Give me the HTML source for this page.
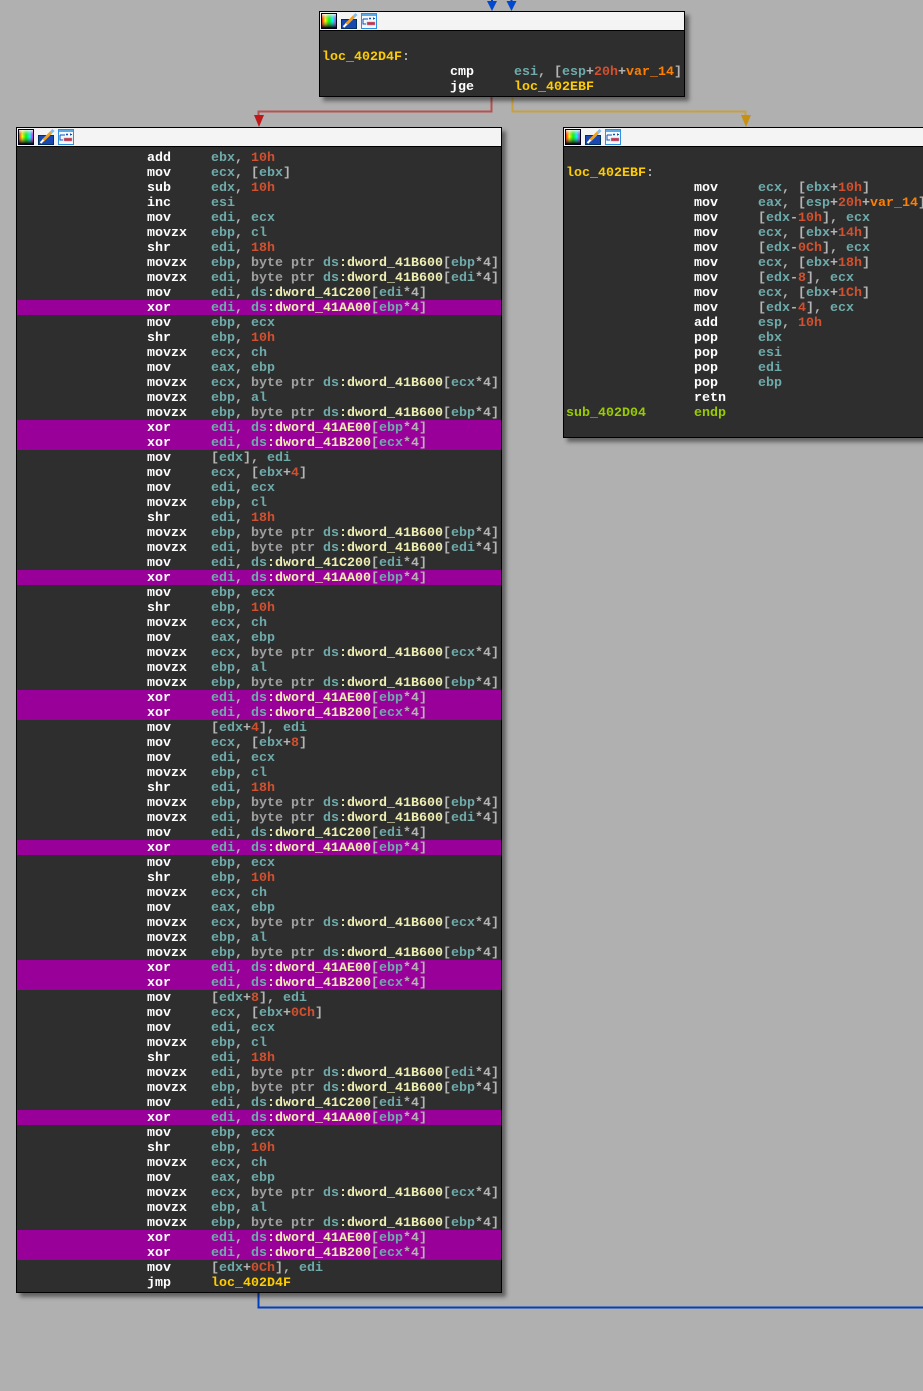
<!DOCTYPE html>
<html><head><meta charset="utf-8"><style>
html,body{margin:0;padding:0;width:923px;height:1391px;overflow:hidden;background:#b0b0b0}
.box{position:absolute;box-sizing:border-box;border:1px solid #000;background:#2e2e2e;box-shadow:4px 4px 4px rgba(0,0,0,.45);font:bold 13.33px/17px "Liberation Mono",monospace;color:#b4b4b4}
.t{position:absolute;left:0;top:0;right:0;height:18px;background:#f4f4f4;border-bottom:1px solid #000}
.t svg{position:absolute;left:1px;top:1px}
.x{position:absolute;left:0;right:0}
.l{height:15px;padding-left:130px;white-space:pre}
.f{height:15px;padding-left:2px;white-space:pre}
.h{background:#990099}
m{display:inline-block;width:64px;color:#fff}
r{color:#6fabab}
n{color:#d2502e}
k{color:#a0a0a0}
d{color:#efefb4}
c{color:#ffcc00}
v{color:#ff8000}
e{color:#9c0}
svg.w{position:absolute;left:0;top:0}
</style></head><body>
<svg class="w" width="923" height="1391">
<defs>
<linearGradient id="hg" x1="0" x2="1" y1="0" y2="0"><stop offset="0" stop-color="#f00"/><stop offset=".25" stop-color="#ff0"/><stop offset=".5" stop-color="#0f0"/><stop offset=".75" stop-color="#0ff"/><stop offset="1" stop-color="#f0f"/></linearGradient>
<linearGradient id="vg" x1="0" x2="0" y1="0" y2="1"><stop offset="0" stop-color="#fff" stop-opacity=".85"/><stop offset=".45" stop-color="#888" stop-opacity="0"/><stop offset="1" stop-color="#000"/></linearGradient>
<g id="ic">
<rect x=".5" y=".5" width="15" height="15" fill="url(#hg)" stroke="#000018"/>
<rect x="1" y="1" width="14" height="14" fill="url(#vg)"/>
<rect x="20.5" y="6.500" width="15" height="9" fill="#1848b0" stroke="#003060"/>
<path d="M25 11.500 L33 3.500" stroke="#f0a020" stroke-width="3"/>
<path d="M33 3.500 L35.500 1" stroke="#80c0f0" stroke-width="3"/>
<path d="M22.500 14 L25.500 11" stroke="#fff" stroke-width="2"/>
<rect x="40.5" y=".5" width="15" height="15" fill="#f4f8ff" stroke="#3090e0"/>
<rect x="41" y="1" width="14" height="2" fill="#60a8e0"/>
<path d="M42 6h5M42 6v5h3" stroke="#1050b0" fill="none"/>
<path d="M48 5.500h2M49 4.500v2M52 5.500h2M52.500 4.500v2" stroke="#1050b0"/>
<rect x="46" y="9" width="8" height="3" fill="#d03040" stroke="#a0a0c0" stroke-width=".5"/>
</g>
</defs>
<path d="M492 0v4M511.500 0v4" stroke="#0040c0" stroke-width="2"/>
<path d="M487 1h10l-5 10zM506.500 1h10l-5 10z" fill="#0048d0"/>
<path d="M491.500 97V111.500H258.500V116" stroke="#b85050" stroke-width="2" fill="none"/>
<path d="M254 115h10l-5 12z" fill="#c01818"/>
<path d="M512.500 97V111.500H745.500V116" stroke="#c8a040" stroke-width="2" fill="none"/>
<path d="M741 115h10l-5 12z" fill="#c89010"/>
<path d="M258.500 1293V1307.500H923" stroke="#0040c0" stroke-width="2" fill="none"/>
</svg>

<div class="box" style="left:319px;top:11px;width:366px;height:86px">
<div class="t"><svg width="60" height="17"><use href="#ic"/></svg></div>
<div class="x" style="top:22px"><div class="f"> </div>
<div class="f"><c>loc_402D4F</c>:</div>
<div class="l"><m>cmp</m><r>esi</r>, [<r>esp</r>+<n>20h</n>+<v>var_14</v>]</div>
<div class="l"><m>jge</m><c>loc_402EBF</c></div></div>
</div>

<div class="box" style="left:563px;top:127px;width:380px;height:311px">
<div class="t"><svg width="60" height="17"><use href="#ic"/></svg></div>
<div class="x" style="top:22px"><div class="f"> </div>
<div class="f"><c>loc_402EBF</c>:</div>
<div class="l"><m>mov</m><r>ecx</r>, [<r>ebx</r>+<n>10h</n>]</div>
<div class="l"><m>mov</m><r>eax</r>, [<r>esp</r>+<n>20h</n>+<v>var_14</v>]</div>
<div class="l"><m>mov</m>[<r>edx</r>-<n>10h</n>], <r>ecx</r></div>
<div class="l"><m>mov</m><r>ecx</r>, [<r>ebx</r>+<n>14h</n>]</div>
<div class="l"><m>mov</m>[<r>edx</r>-<n>0Ch</n>], <r>ecx</r></div>
<div class="l"><m>mov</m><r>ecx</r>, [<r>ebx</r>+<n>18h</n>]</div>
<div class="l"><m>mov</m>[<r>edx</r>-<n>8</n>], <r>ecx</r></div>
<div class="l"><m>mov</m><r>ecx</r>, [<r>ebx</r>+<n>1Ch</n>]</div>
<div class="l"><m>mov</m>[<r>edx</r>-<n>4</n>], <r>ecx</r></div>
<div class="l"><m>add</m><r>esp</r>, <n>10h</n></div>
<div class="l"><m>pop</m><r>ebx</r></div>
<div class="l"><m>pop</m><r>esi</r></div>
<div class="l"><m>pop</m><r>edi</r></div>
<div class="l"><m>pop</m><r>ebp</r></div>
<div class="l"><m>retn</m></div>
<div class="f"><e>sub_402D04      endp</e></div></div>
</div>

<div class="box" style="left:16px;top:127px;width:486px;height:1166px">
<div class="t"><svg width="60" height="17"><use href="#ic"/></svg></div>
<div class="x" style="top:22px">
<div class="l"><m>add</m><r>ebx</r>, <n>10h</n></div>
<div class="l"><m>mov</m><r>ecx</r>, [<r>ebx</r>]</div>
<div class="l"><m>sub</m><r>edx</r>, <n>10h</n></div>
<div class="l"><m>inc</m><r>esi</r></div>
<div class="l"><m>mov</m><r>edi</r>, <r>ecx</r></div>
<div class="l"><m>movzx</m><r>ebp</r>, <r>cl</r></div>
<div class="l"><m>shr</m><r>edi</r>, <n>18h</n></div>
<div class="l"><m>movzx</m><r>ebp</r>, <k>byte ptr</k> <r>ds</r><d>:dword_41B600</d>[<r>ebp</r>*4]</div>
<div class="l"><m>movzx</m><r>edi</r>, <k>byte ptr</k> <r>ds</r><d>:dword_41B600</d>[<r>edi</r>*4]</div>
<div class="l"><m>mov</m><r>edi</r>, <r>ds</r><d>:dword_41C200</d>[<r>edi</r>*4]</div>
<div class="l h"><m>xor</m><r>edi</r>, <r>ds</r><d>:dword_41AA00</d>[<r>ebp</r>*4]</div>
<div class="l"><m>mov</m><r>ebp</r>, <r>ecx</r></div>
<div class="l"><m>shr</m><r>ebp</r>, <n>10h</n></div>
<div class="l"><m>movzx</m><r>ecx</r>, <r>ch</r></div>
<div class="l"><m>mov</m><r>eax</r>, <r>ebp</r></div>
<div class="l"><m>movzx</m><r>ecx</r>, <k>byte ptr</k> <r>ds</r><d>:dword_41B600</d>[<r>ecx</r>*4]</div>
<div class="l"><m>movzx</m><r>ebp</r>, <r>al</r></div>
<div class="l"><m>movzx</m><r>ebp</r>, <k>byte ptr</k> <r>ds</r><d>:dword_41B600</d>[<r>ebp</r>*4]</div>
<div class="l h"><m>xor</m><r>edi</r>, <r>ds</r><d>:dword_41AE00</d>[<r>ebp</r>*4]</div>
<div class="l h"><m>xor</m><r>edi</r>, <r>ds</r><d>:dword_41B200</d>[<r>ecx</r>*4]</div>
<div class="l"><m>mov</m>[<r>edx</r>], <r>edi</r></div>
<div class="l"><m>mov</m><r>ecx</r>, [<r>ebx</r>+<n>4</n>]</div>
<div class="l"><m>mov</m><r>edi</r>, <r>ecx</r></div>
<div class="l"><m>movzx</m><r>ebp</r>, <r>cl</r></div>
<div class="l"><m>shr</m><r>edi</r>, <n>18h</n></div>
<div class="l"><m>movzx</m><r>ebp</r>, <k>byte ptr</k> <r>ds</r><d>:dword_41B600</d>[<r>ebp</r>*4]</div>
<div class="l"><m>movzx</m><r>edi</r>, <k>byte ptr</k> <r>ds</r><d>:dword_41B600</d>[<r>edi</r>*4]</div>
<div class="l"><m>mov</m><r>edi</r>, <r>ds</r><d>:dword_41C200</d>[<r>edi</r>*4]</div>
<div class="l h"><m>xor</m><r>edi</r>, <r>ds</r><d>:dword_41AA00</d>[<r>ebp</r>*4]</div>
<div class="l"><m>mov</m><r>ebp</r>, <r>ecx</r></div>
<div class="l"><m>shr</m><r>ebp</r>, <n>10h</n></div>
<div class="l"><m>movzx</m><r>ecx</r>, <r>ch</r></div>
<div class="l"><m>mov</m><r>eax</r>, <r>ebp</r></div>
<div class="l"><m>movzx</m><r>ecx</r>, <k>byte ptr</k> <r>ds</r><d>:dword_41B600</d>[<r>ecx</r>*4]</div>
<div class="l"><m>movzx</m><r>ebp</r>, <r>al</r></div>
<div class="l"><m>movzx</m><r>ebp</r>, <k>byte ptr</k> <r>ds</r><d>:dword_41B600</d>[<r>ebp</r>*4]</div>
<div class="l h"><m>xor</m><r>edi</r>, <r>ds</r><d>:dword_41AE00</d>[<r>ebp</r>*4]</div>
<div class="l h"><m>xor</m><r>edi</r>, <r>ds</r><d>:dword_41B200</d>[<r>ecx</r>*4]</div>
<div class="l"><m>mov</m>[<r>edx</r>+<n>4</n>], <r>edi</r></div>
<div class="l"><m>mov</m><r>ecx</r>, [<r>ebx</r>+<n>8</n>]</div>
<div class="l"><m>mov</m><r>edi</r>, <r>ecx</r></div>
<div class="l"><m>movzx</m><r>ebp</r>, <r>cl</r></div>
<div class="l"><m>shr</m><r>edi</r>, <n>18h</n></div>
<div class="l"><m>movzx</m><r>ebp</r>, <k>byte ptr</k> <r>ds</r><d>:dword_41B600</d>[<r>ebp</r>*4]</div>
<div class="l"><m>movzx</m><r>edi</r>, <k>byte ptr</k> <r>ds</r><d>:dword_41B600</d>[<r>edi</r>*4]</div>
<div class="l"><m>mov</m><r>edi</r>, <r>ds</r><d>:dword_41C200</d>[<r>edi</r>*4]</div>
<div class="l h"><m>xor</m><r>edi</r>, <r>ds</r><d>:dword_41AA00</d>[<r>ebp</r>*4]</div>
<div class="l"><m>mov</m><r>ebp</r>, <r>ecx</r></div>
<div class="l"><m>shr</m><r>ebp</r>, <n>10h</n></div>
<div class="l"><m>movzx</m><r>ecx</r>, <r>ch</r></div>
<div class="l"><m>mov</m><r>eax</r>, <r>ebp</r></div>
<div class="l"><m>movzx</m><r>ecx</r>, <k>byte ptr</k> <r>ds</r><d>:dword_41B600</d>[<r>ecx</r>*4]</div>
<div class="l"><m>movzx</m><r>ebp</r>, <r>al</r></div>
<div class="l"><m>movzx</m><r>ebp</r>, <k>byte ptr</k> <r>ds</r><d>:dword_41B600</d>[<r>ebp</r>*4]</div>
<div class="l h"><m>xor</m><r>edi</r>, <r>ds</r><d>:dword_41AE00</d>[<r>ebp</r>*4]</div>
<div class="l h"><m>xor</m><r>edi</r>, <r>ds</r><d>:dword_41B200</d>[<r>ecx</r>*4]</div>
<div class="l"><m>mov</m>[<r>edx</r>+<n>8</n>], <r>edi</r></div>
<div class="l"><m>mov</m><r>ecx</r>, [<r>ebx</r>+<n>0Ch</n>]</div>
<div class="l"><m>mov</m><r>edi</r>, <r>ecx</r></div>
<div class="l"><m>movzx</m><r>ebp</r>, <r>cl</r></div>
<div class="l"><m>shr</m><r>edi</r>, <n>18h</n></div>
<div class="l"><m>movzx</m><r>edi</r>, <k>byte ptr</k> <r>ds</r><d>:dword_41B600</d>[<r>edi</r>*4]</div>
<div class="l"><m>movzx</m><r>ebp</r>, <k>byte ptr</k> <r>ds</r><d>:dword_41B600</d>[<r>ebp</r>*4]</div>
<div class="l"><m>mov</m><r>edi</r>, <r>ds</r><d>:dword_41C200</d>[<r>edi</r>*4]</div>
<div class="l h"><m>xor</m><r>edi</r>, <r>ds</r><d>:dword_41AA00</d>[<r>ebp</r>*4]</div>
<div class="l"><m>mov</m><r>ebp</r>, <r>ecx</r></div>
<div class="l"><m>shr</m><r>ebp</r>, <n>10h</n></div>
<div class="l"><m>movzx</m><r>ecx</r>, <r>ch</r></div>
<div class="l"><m>mov</m><r>eax</r>, <r>ebp</r></div>
<div class="l"><m>movzx</m><r>ecx</r>, <k>byte ptr</k> <r>ds</r><d>:dword_41B600</d>[<r>ecx</r>*4]</div>
<div class="l"><m>movzx</m><r>ebp</r>, <r>al</r></div>
<div class="l"><m>movzx</m><r>ebp</r>, <k>byte ptr</k> <r>ds</r><d>:dword_41B600</d>[<r>ebp</r>*4]</div>
<div class="l h"><m>xor</m><r>edi</r>, <r>ds</r><d>:dword_41AE00</d>[<r>ebp</r>*4]</div>
<div class="l h"><m>xor</m><r>edi</r>, <r>ds</r><d>:dword_41B200</d>[<r>ecx</r>*4]</div>
<div class="l"><m>mov</m>[<r>edx</r>+<n>0Ch</n>], <r>edi</r></div>
<div class="l"><m>jmp</m><c>loc_402D4F</c></div>
</div>
</div>
</body></html>
